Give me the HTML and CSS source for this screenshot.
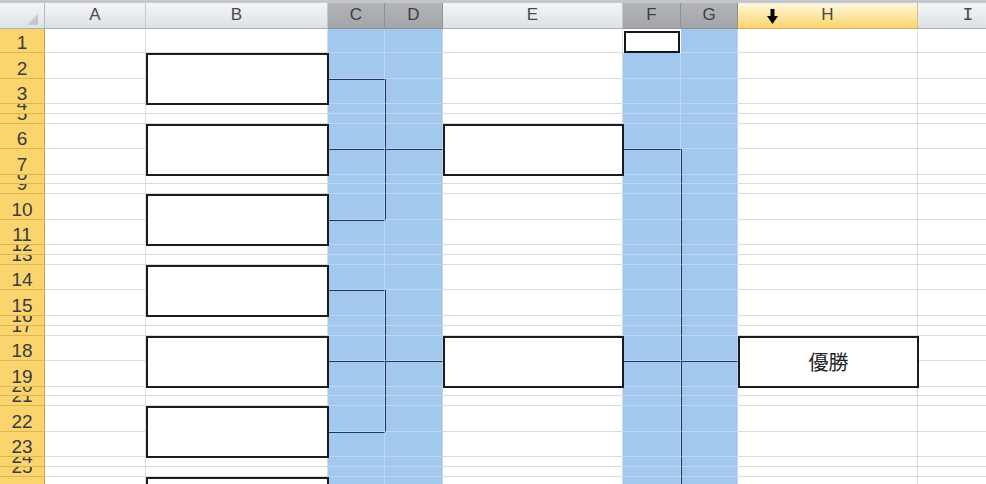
FILE: index.html
```html
<!DOCTYPE html>
<html lang="ja">
<head>
<meta charset="utf-8">
<title>トーナメント表</title>
<link rel="stylesheet" href="styles.css">
</head>
<body>
<div class="topbar"></div>
<div class="sheet" id="sheet"></div>
<script src="script.js"></script>
</body>
</html>
```

FILE: styles.css
```css
html, body {
  margin: 0;
  height: 100%;
  overflow: hidden;
  background: #fff;
}
body {
  font-family: "Liberation Sans", "Noto Sans CJK JP", sans-serif;
}
.topbar {
  height: 3px;
  background: #c4c8ce;
}
.sheet {
  display: grid;
  grid-template-columns: 45px 101px 182px 57px 58px 180px 58px 57px 180px 101px;
  grid-template-rows: 26px 24px repeat(6, 25.5px 25.5px 9.8333px 9.8333px) 25.5px 25.5px;
}
.sheet > div {
  box-sizing: border-box;
  min-width: 0;
  min-height: 0;
}

/* corner */
.corner {
  display: flex;
  justify-content: flex-end;
  align-items: flex-end;
  padding: 0 6px 3px 0;
  background: linear-gradient(#f3f5f8, #dfe3e8);
  border-right: 1px solid #b4bac2;
  border-bottom: 1px solid #a9b0b9;
}
.corner-tri {
  width: 11px;
  height: 11px;
  background: #c3c8cf;
  clip-path: polygon(100% 0, 100% 100%, 0 100%);
}

/* column headers */
.ch {
  position: relative;
  display: flex;
  align-items: center;
  justify-content: center;
  padding-bottom: 1px;
  font-size: 17px;
  line-height: 18px;
  color: #4a4a4a;
  background: linear-gradient(#f3f5f8, #dde1e7);
  border-right: 1px solid #c5cad0;
  border-bottom: 1px solid #a9b0b9;
}
.ch.sel {
  background: linear-gradient(#b2b4b7, #a3a5a8);
  border-right-color: #8e9195;
  border-bottom-color: #8e9195;
  color: #3e3e3e;
}
.ch.hot {
  background: linear-gradient(#fef7e0, #fde59e 55%, #f9d36c);
  border-right-color: #d9bf7e;
  border-bottom-color: #d9b45e;
}
.serif-i {
  font-family: "Liberation Mono", monospace;
  font-size: 18px;
}
.cursor {
  position: absolute;
  left: 29px;
  top: 6px;
  width: 11px;
  height: 15px;
}

/* row headers */
.rh {
  display: flex;
  align-items: flex-end;
  justify-content: center;
  overflow: hidden;
  font-size: 19px;
  line-height: 18px;
  color: #3b3b3b;
  background: #fad56d;
  border-right: 1px solid #c9a24c;
  border-bottom: 1px solid #e1b452;
}

/* cells */
.cell {
  background: #fff;
  border-right: 1px solid #dadada;
  border-bottom: 1px solid #dadada;
}
.cell.blue {
  background: #a3c8ee;
  border-right-color: #bcd5f1;
  border-bottom-color: #bcd5f1;
}
.cell.t {
  border-top: 1px solid #1f3757;
}
.cell.l {
  border-left: 1px solid #1f3757;
}
.cell.active {
  margin: 2px 1px 0 1px;
  background: #fff;
  border: 2px solid #151515;
}
.cell.box {
  grid-row: span 2;
  margin: 0 -1px -1px 0;
  z-index: 1;
  display: flex;
  align-items: center;
  justify-content: center;
  background: #fff;
  border: 2px solid #1c1c1c;
  font-family: "Noto Sans CJK JP", sans-serif;
  font-size: 20px;
  color: #222;
}
```

FILE: script.js
```js
(function () {
  var COLS = ['A', 'B', 'C', 'D', 'E', 'F', 'G', 'H', 'I'];
  var BLUE = ['C', 'D', 'F', 'G'];
  var ROWS = 27;
  var merges = ['B2', 'B6', 'B10', 'B14', 'B18', 'B22', 'B26', 'E6', 'E18', 'H18'];
  var texts = { H18: '優勝' };
  var active = 'F1';
  var tops = ['C3', 'C7', 'D7', 'C11', 'C15', 'C19', 'D19', 'C23', 'F7', 'F19', 'G19'];
  var lefts = [];
  var r;
  for (r = 3; r <= 10; r++) lefts.push('D' + r);
  for (r = 15; r <= 22; r++) lefts.push('D' + r);
  for (r = 7; r <= ROWS; r++) lefts.push('G' + r);

  var covered = {};
  merges.forEach(function (m) {
    covered[m[0] + (parseInt(m.slice(1), 10) + 1)] = true;
  });

  var sheet = document.getElementById('sheet');
  function el(cls, text) {
    var d = document.createElement('div');
    d.className = cls;
    if (text) d.textContent = text;
    sheet.appendChild(d);
    return d;
  }

  var corner = el('corner');
  var tri = document.createElement('span');
  tri.className = 'corner-tri';
  corner.appendChild(tri);

  COLS.forEach(function (c) {
    var cls = 'ch';
    if (BLUE.indexOf(c) >= 0) cls += ' sel';
    if (c === 'H') cls += ' hot';
    var h = el(cls);
    var s = document.createElement('span');
    if (c === 'I') s.className = 'serif-i';
    s.textContent = c;
    h.appendChild(s);
    if (c === 'H') {
      h.insertAdjacentHTML('beforeend',
        '<svg class="cursor" viewBox="0 0 11 15"><polygon points="3.5,0 7.5,0 7.5,7 11,7 5.5,15 0,7 3.5,7" fill="#000"/></svg>');
    }
  });

  for (r = 1; r <= ROWS; r++) {
    el('rh', String(r));
    COLS.forEach(function (c) {
      var id = c + r;
      if (covered[id]) return;
      var cls = 'cell';
      if (BLUE.indexOf(c) >= 0) cls += ' blue';
      if (tops.indexOf(id) >= 0) cls += ' t';
      if (lefts.indexOf(id) >= 0) cls += ' l';
      if (merges.indexOf(id) >= 0) cls += ' box';
      if (id === active) cls += ' active';
      el(cls, texts[id] || '');
    });
  }
})();
```
